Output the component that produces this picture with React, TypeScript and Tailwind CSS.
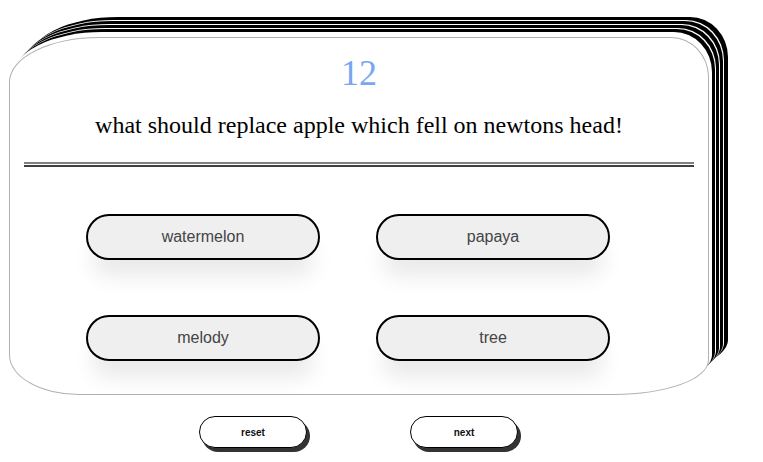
import React from "react";

export default function App() {
  const opts = [
    ["watermelon", "papaya"],
    ["melody", "tree"],
  ];
  return (
    <div className="w-[763px] h-[462px] bg-white overflow-hidden pt-[37px]">
      <div
        className="ml-[9px] w-[700px] h-[358px] bg-white border border-[#b0b0b0] rounded-[90px_38px_95px_70px/45px_40px_35px_40px] shadow-[3px_-5px_0_#fff,6px_-8px_0_#000,7px_-9px_0_#fff,10px_-12px_0_#000,11px_-13px_0_#fff,14px_-16px_0_#000,15px_-17px_0_#fff,19px_-20px_0_#000] flex flex-col items-center"
      >
        <div className="mt-[15px] h-[41px] leading-[41px] text-[36px] text-[#77a7ee] font-['Liberation_Serif',serif]">
          12
        </div>
        <div className="mt-[17px] h-[28px] leading-[28px] text-[24px] text-black font-['Liberation_Serif',serif]">
          what should replace apple which fell on newtons head!
        </div>
        <div className="mt-[23px] w-[670px] flex flex-col gap-[1px]">
          <div className="h-[2px] bg-[#7f7f7f]" />
          <div className="h-[2px] bg-[#404040]" />
        </div>
        <div className="self-start ml-[76px] mt-[47px] flex flex-col gap-[55px]">
          {opts.map((row, i) => (
            <div key={i} className="flex gap-[56px]">
              {row.map((o) => (
                <div
                  key={o}
                  className="w-[234px] h-[46px] rounded-full border-2 border-black bg-[#efefef] flex items-center justify-center text-[16px] text-[#444] font-['Liberation_Sans',Arial,sans-serif] shadow-[0_22px_22px_-6px_rgba(0,0,0,0.09)]"
                >
                  {o}
                </div>
              ))}
            </div>
          ))}
        </div>
      </div>
      <div className="mt-[21px] ml-[199px] flex gap-[103px]">
        {["reset", "next"].map((b) => (
          <div
            key={b}
            className="w-[108px] h-[32px] rounded-full border-[1.5px] border-black bg-white flex items-center justify-center text-[10px] font-bold text-[#111] font-['Liberation_Sans',Arial,sans-serif] shadow-[3px_4px_0_#333]"
          >
            {b}
          </div>
        ))}
      </div>
    </div>
  );
}
